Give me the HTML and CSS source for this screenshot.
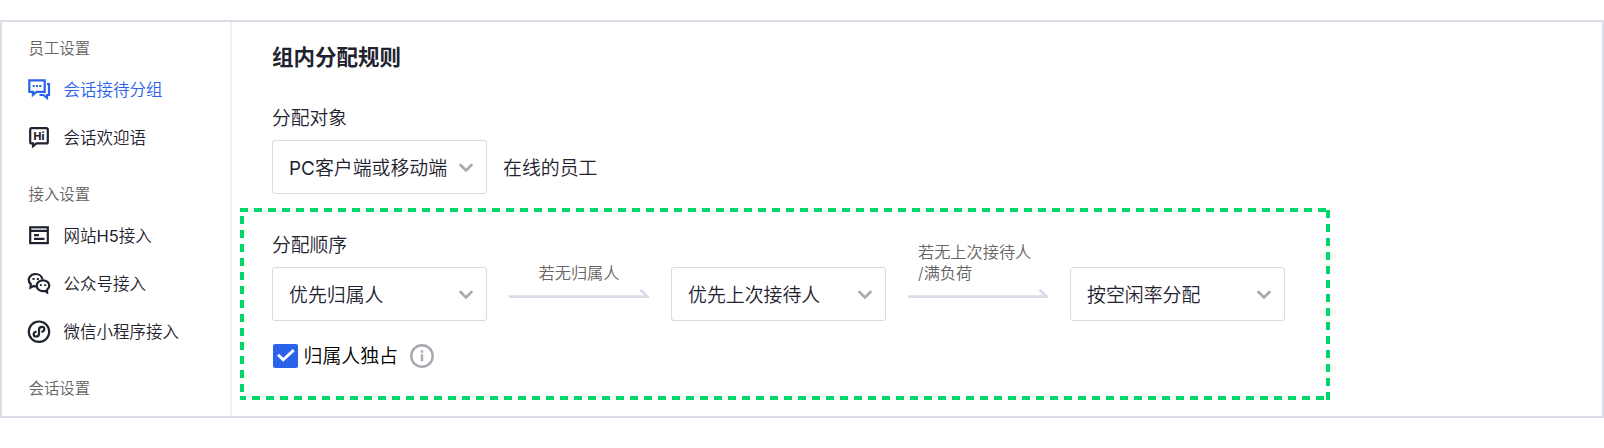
FILE: index.html
```html
<!DOCTYPE html>
<html lang="zh-CN">
<head>
    <meta charset="UTF-8">
    <title>会话接待分组</title>
    <link rel="stylesheet" href="styles.css">
</head>
<body>

    <div class="page">
        <div class="sidebar">
            <div class="menu-title">员工设置</div>
            <a class="menu-item active">
                <svg class="menu-icon" viewBox="0 0 24 24">
                    <path d="M2.300 2.300h15.400v11.600H9.500l-3.600 3v-3H2.300z"/>
                    <path d="M20 6h2v11h-2v3l-3.600-3H12.500"/>
                    <path d="M5.700 8h2M9 8h2M12.300 8h2"/>
                </svg>
                <span>会话接待分组</span>
            </a>
            <a class="menu-item">
                <svg class="menu-icon" viewBox="0 0 24 24">
                    <path d="M4.700 2.200h14.600q1.500 0 1.500 1.500v12.200q0 1.500-1.500 1.500H9.500L6 20.200V17.400H4.700q-1.500 0-1.500-1.500V3.700q0-1.500 1.500-1.500z"/>
                    <text class="hi" x="12" y="13.500">Hi</text>
                </svg>
                <span>会话欢迎语</span>
            </a>

            <div class="menu-title">接入设置</div>
            <a class="menu-item">
                <svg class="menu-icon" viewBox="0 0 24 24">
                    <rect x="3.200" y="3.300" width="17.600" height="15.800"/>
                    <path d="M3.200 6.800h17.600M7 11.200h5M7 14.800h10.500"/>
                </svg>
                <span>网站<b>H5</b>接入</span>
            </a>
            <a class="menu-item">
                <svg class="menu-icon" viewBox="0 0 24 24">
                    <path d="M9.500 14.300q-1.500.1-2.700-.4L3.500 15.600l.3-3.500C-.8 7.500 3.300 2 8.500 2c3.800 0 6.500 2.500 6.900 5.300"/>
                    <path d="M16 8.300c3.600 0 6.300 2.400 6.300 5.300 0 1.700-.9 3-2.200 4v2.800l-2-1.400c-4 .9-8.400-1.400-8.400-5.400 0-2.900 2.700-5.300 6.300-5.300z"/>
                    <path class="dots" d="M5.500 7h2M9.800 7h2M12.800 13.200h2M17.200 13.200h2"/>
                </svg>
                <span>公众号接入</span>
            </a>
            <a class="menu-item">
                <svg class="menu-icon" viewBox="0 0 24 24">
                    <circle cx="12" cy="11.700" r="10.200"/>
                    <path d="M9.600 11.500C5.500 12 6.200 16.500 9 16.500c1.700 0 3-1 3-2.800V9.700c0-1.700 1.400-2.800 3-2.800 2.800 0 3.600 4.300-.6 5"/>
                </svg>
                <span>微信小程序接入</span>
            </a>

            <div class="menu-title">会话设置</div>
        </div>

        <div class="main">
            <h1 class="title">组内分配规则</h1>

            <div class="target">
                <div class="label">分配对象</div>
                <div class="row">
                    <div class="select">
                        <span><b>PC</b>客户端或移动端</span>
                        <svg class="chevron" viewBox="0 0 16 12"><path d="M2.500 3l5.500 5.500L13.500 3"/></svg>
                    </div>
                    <span class="suffix">在线的员工</span>
                </div>
            </div>

            <div class="order">
                <div class="label">分配顺序</div>
                <div class="row">
                    <div class="select">
                        <span>优先归属人</span>
                        <svg class="chevron" viewBox="0 0 16 12"><path d="M2.500 3l5.500 5.500L13.500 3"/></svg>
                    </div>
                    <div class="step">
                        <div class="step-text center">若无归属人</div>
                        <svg class="arrow" viewBox="0 0 140 10"><path d="M0 7.600h140M131.500.8l7.200 7"/></svg>
                    </div>
                    <div class="select">
                        <span>优先上次接待人</span>
                        <svg class="chevron" viewBox="0 0 16 12"><path d="M2.500 3l5.500 5.500L13.500 3"/></svg>
                    </div>
                    <div class="step">
                        <div class="step-text">若无上次接待人<br>/满负荷</div>
                        <svg class="arrow" viewBox="0 0 140 10"><path d="M0 7.600h140M131.500.8l7.200 7"/></svg>
                    </div>
                    <div class="select">
                        <span>按空闲率分配</span>
                        <svg class="chevron" viewBox="0 0 16 12"><path d="M2.500 3l5.500 5.500L13.500 3"/></svg>
                    </div>
                </div>
                <div class="exclusive">
                    <span class="checkbox">
                        <svg viewBox="0 0 24 24"><path d="M5 10.500l5 5L20.300 6"/></svg>
                    </span>
                    <span class="exclusive-text">归属人独占</span>
                    <svg class="info" viewBox="0 0 24 24">
                        <circle cx="12" cy="12" r="10.700"/>
                        <path d="M12 6.300v2.400M12 10.300v7"/>
                    </svg>
                </div>
            </div>
        </div>
    </div>

</body>
</html>
```
FILE: styles.css
```css
* {
    box-sizing: border-box;
}

body {
    margin: 0;
    padding: 20px 0 0;
    background-color: #fff;
    color: #1f2330;
    font-family: Inter, "Noto Sans CJK SC", sans-serif;
    font-weight: 350;
}

b {
    font-weight: 400;
}

svg {
    display: block;
    flex: none;
    fill: none;
    stroke: currentColor;
}

.page {
    display: flex;
    height: 398px;
    border: 2px solid #dadde8;
}

/* Left menu */
.sidebar {
    width: 230px;
    padding: 15px 0 0 25px;
    border-right: 2px solid #f0f1f7;
}

.menu-title {
    height: 24px;
    margin-bottom: 5px;
    padding-left: 1.5px;
    color: #666;
    font-size: 15.4px;
    line-height: 24px;
}

.menu-item + .menu-title {
    margin-top: 21px;
}

.menu-item {
    display: flex;
    align-items: center;
    gap: 12.5px;
    height: 48px;
    font-size: 16.5px;
}

.menu-item span {
    padding-bottom: 2px;
}

.menu-item.active {
    color: #2a63ea;
}

.menu-icon {
    width: 24px;
    height: 24px;
    stroke-width: 2.2;
}

.menu-icon .hi {
    fill: currentColor;
    stroke: none;
    font-size: 10.5px;
    font-weight: 800;
    text-anchor: middle;
}

.menu-icon .dots {
    stroke-width: 1.8;
}

/* Rules */
.main {
    padding: 19px 0 0 8px;
}

.title {
    margin: 0 0 30px 32px;
    font-size: 21.5px;
    font-weight: 600;
    line-height: 32px;
}

.target {
    height: 105px;
    padding-left: 32px;
}

.label {
    height: 37.3px;
    font-size: 18.8px;
    line-height: 32px;
}

.row {
    display: flex;
    align-items: center;
    font-size: 18.9px;
}

.select {
    display: flex;
    align-items: center;
    justify-content: space-between;
    width: 215px;
    height: 53.5px;
    padding: 0 12px 0 16px;
    border: 1px solid #d6dae5;
    border-radius: 3px;
}

.select span,
.suffix,
.exclusive-text {
    padding-bottom: 2px;
}

.chevron {
    width: 16px;
    height: 12px;
    margin-top: 2px;
    color: #a6a9b2;
    stroke-width: 2.6;
    stroke-linecap: round;
}

.suffix {
    margin-left: 16px;
}

/* Dashed frame, 8px dash and 6px gap on every side */
.order {
    width: 1090px;
    height: 192px;
    padding: 22px 0 0 32px;
    background-image:
        repeating-linear-gradient(90deg, #00d76b 0 8px, transparent 8px 14px),
        repeating-linear-gradient(180deg, transparent 0 2px, #00d76b 2px 10px, transparent 10px 14px),
        repeating-linear-gradient(90deg, #00d76b 0 6px, transparent 6px 12px, #00d76b 12px 14px),
        repeating-linear-gradient(180deg, #00d76b 0 2px, transparent 2px 8px, #00d76b 8px 14px);
    background-repeat: no-repeat;
    background-position: 0 0, 1086px 0, 0 188px, 0 0;
    background-size: 1086px 4px, 4px 192px, 1086px 4px, 4px 192px;
}

.step {
    display: flex;
    flex-direction: column;
    justify-content: flex-end;
    width: 140px;
    height: 53.5px;
    margin: 0 22px;
    padding-bottom: 22px;
}

.step-text {
    padding-left: 10px;
    color: #666;
    font-size: 16.2px;
    line-height: 21.5px;
    margin-bottom: 4px;
}

.step-text.center {
    padding-left: 0;
    text-align: center;
}

.arrow {
    width: 140px;
    height: 10px;
    color: #dadde8;
    stroke-width: 2.7;
}

.exclusive {
    display: flex;
    align-items: center;
    height: 24px;
    margin-top: 23px;
    padding-left: 1px;
    color: #000;
    font-size: 18.9px;
}

.exclusive-text {
    padding-bottom: 3px;
}

.checkbox {
    width: 24.5px;
    height: 24px;
    margin-right: 6px;
    border-radius: 2px;
    background-color: #2a63ea;
    color: #fff;
}

.checkbox svg {
    stroke-width: 2.8;
}

.info {
    width: 24px;
    height: 24px;
    margin-left: 12px;
    color: #a6a9b2;
    stroke-width: 2.4;
}
```
